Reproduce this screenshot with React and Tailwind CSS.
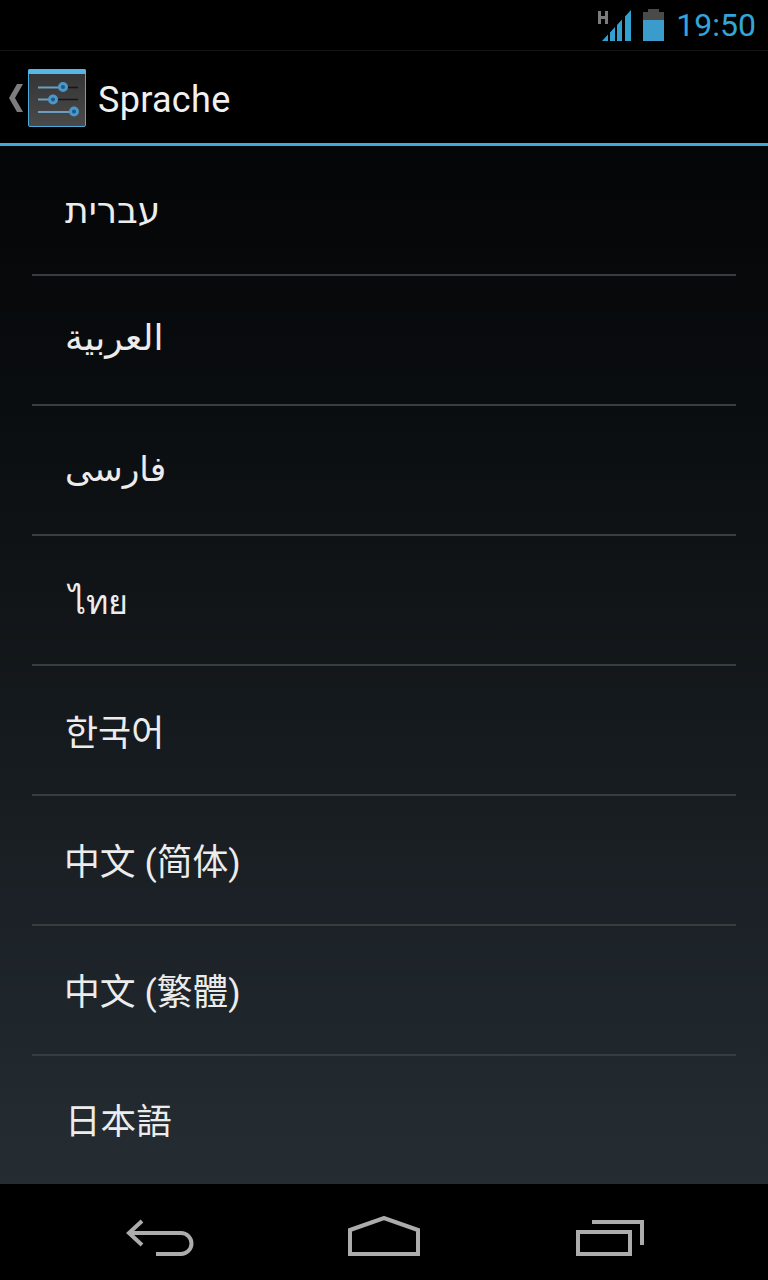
const LANGUAGES = [
  { label: "עברית", dir: "rtl", rowClass: "pt-[2px] pl-[33px]", textClass: "text-[36px]" },
  { label: "العربية", dir: "rtl", rowClass: "pb-[4px] pl-[33px]", textClass: "text-[36px]" },
  { label: "فارسى", dir: "rtl", rowClass: "pb-[2px] pl-[33px]", textClass: "text-[34.5px]" },
  { label: "ไทย", rowClass: "pt-[4px] pl-[37px]", textClass: "text-[34px]" },
  { label: "한국어", rowClass: "pt-[8px] pl-[33px]", textClass: "text-[36px]" },
  { label: "中文 (简体)", rowClass: "pt-[7px] pl-[32px]", textClass: "text-[35.8px]" },
  { label: "中文 (繁體)", rowClass: "pt-[7px] pl-[32px]", textClass: "text-[35.8px]" },
  { label: "日本語", rowClass: "pt-[6px] pl-[33px]", textClass: "text-[35.6px]" },
];

function SignalIcon() {
  return (
    <svg width="34" height="33" viewBox="0 0 34 33">
      <path d="M0 2h3v5h4V2h3v13H7V10H3v5H0z" fill="#7b7b7b" />
      <path d="M4 32l6-6.4V32zM12 32v-8.6l5-5.4v14zM19 32V16l5-5.4V32zM27 32V7.4L33 1v31z" fill="#33a1cf" />
    </svg>
  );
}

function BatteryIcon() {
  return (
    <svg width="21" height="32" viewBox="0 0 21 32">
      <path d="M5 0h11v3h5v8H0V3h5z" fill="#4a4a4a" />
      <rect x="0" y="11" width="21" height="21" fill="#3b9ccb" />
    </svg>
  );
}

function SettingsIcon() {
  return (
    <svg width="58" height="58" viewBox="0 0 58 58">
      <defs>
        <linearGradient id="tile" x1="0" y1="0" x2="0" y2="1">
          <stop offset="0" stopColor="#333333" />
          <stop offset="1" stopColor="#4a4a4a" />
        </linearGradient>
      </defs>
      <rect x="0.5" y="0.5" width="57" height="57" rx="1.5" fill="url(#tile)" stroke="#4ba9dc" />
      <rect x="0" y="0" width="58" height="5" rx="1.5" fill="#55b6e8" />
      <path d="M10 18.5h22" stroke="#6d9dbd" strokeWidth="2" />
      <path d="M40 18.5h10" stroke="#161616" strokeWidth="1.5" />
      <circle cx="35" cy="18" r="3.5" fill="#24587f" stroke="#4a97cc" strokeWidth="3" />
      <path d="M10 30.5h12" stroke="#6d9dbd" strokeWidth="2" />
      <path d="M30 30.5h20" stroke="#161616" strokeWidth="1.5" />
      <circle cx="25" cy="30.5" r="3.5" fill="#24587f" stroke="#4a97cc" strokeWidth="3" />
      <path d="M10 43h32" stroke="#6d9dbd" strokeWidth="2" />
      <circle cx="46" cy="42.5" r="3.5" fill="#24587f" stroke="#4a97cc" strokeWidth="3" />
    </svg>
  );
}

function BackIcon() {
  return (
    <svg width="68" height="38" viewBox="0 0 68 38" fill="none" stroke="#acacac" strokeWidth="4">
      <path d="M16 3L3 15l13 12" />
      <path d="M3 15h52a10.5 10.5 0 0 1 0 21H30" />
    </svg>
  );
}

function HomeIcon() {
  return (
    <svg width="72" height="40" viewBox="0 0 72 40" fill="none" stroke="#acacac" strokeWidth="4">
      <path d="M2 14L36 2l34 12v24H2z" />
    </svg>
  );
}

function RecentsIcon() {
  return (
    <svg width="68" height="36" viewBox="0 0 68 36" fill="none" stroke="#acacac" strokeWidth="4">
      <rect x="2" y="12" width="52" height="22" />
      <path d="M16 2h50v23" />
    </svg>
  );
}

export default function App() {
  return (
    <div className="w-[768px] h-[1280px] flex flex-col bg-black overflow-hidden font-['Roboto','DejaVu_Sans','Noto_Sans_CJK_SC',sans-serif]">
      <div className="h-[51px] shrink-0 border-b border-[#141414] flex items-center justify-end pr-[12px]">
        <SignalIcon />
        <div className="ml-[11px] mr-[12px] flex">
          <BatteryIcon />
        </div>
        <span className="text-[32px] leading-none text-[#33a5d8]">19:50</span>
      </div>

      <div className="h-[95px] shrink-0 flex items-center border-b-[3px] border-[#3fa9d8] pl-[8px]">
        <svg width="16" height="28" viewBox="0 0 16 28" className="mr-[4px] mt-[2px]">
          <path d="M9 0h6L7 14l8 14H9L1 14z" fill="#7d7d7d" />
        </svg>
        <div className="flex pt-[2px]">
          <SettingsIcon />
        </div>
        <span className="ml-[12px] pt-[6px] text-[36px] tracking-[0.3px] leading-none text-[#f0f0f0]">Sprache</span>
      </div>

      <div className="flex-1 min-h-0 bg-gradient-to-b from-[#040506] to-[#252d33] px-[32px] flex flex-col">
        {LANGUAGES.map((lang, i) => (
          <div
            key={lang.label}
            className={`shrink-0 flex items-center border-[#3a3d40] ${lang.rowClass} ${
              i === 7 ? "h-[128px]" : "h-[130px] border-b-2"
            }`}
          >
            <span dir={lang.dir} className={`leading-none text-[#ececec] ${lang.textClass}`}>
              {lang.label}
            </span>
          </div>
        ))}
      </div>

      <div className="h-[96px] shrink-0 bg-black flex items-end pl-[126px] pb-[24px]">
        <BackIcon />
        <div className="ml-[154px] flex">
          <HomeIcon />
        </div>
        <div className="ml-[156px] flex">
          <RecentsIcon />
        </div>
      </div>
    </div>
  );
}
